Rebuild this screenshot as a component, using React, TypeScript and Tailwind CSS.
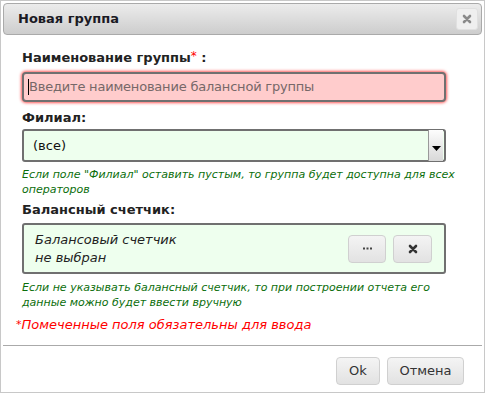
import React from "react";

const font = { fontFamily: '"DejaVu Sans", Verdana, sans-serif' };

export default function App() {
  return (
    <div
      className="w-[485px] h-[393px] border border-[#c8c8c8] bg-white flex flex-col text-[13px] text-[#222]"
      style={font}
    >
      {/* Title bar */}
      <div className="mx-[2px] mt-[2px] h-[32px] rounded-[4px] border border-[#aaa] bg-gradient-to-b from-[#ececec] to-[#cdcdcd] flex items-center justify-between pl-[14px] pr-[3px]">
        <span className="font-bold text-[13px] text-[#1a1a24] leading-[16px]">Новая группа</span>
        <div className="w-[22px] h-[22px] rounded-[3px] bg-[#efefef] border border-[#e0e0e0] flex items-center justify-center">
          <svg width="10" height="10" viewBox="0 0 10 10">
            <path d="M2 2 L8 8 M8 2 L2 8" stroke="#8a8a8a" strokeWidth="2.6" strokeLinecap="round" />
          </svg>
        </div>
      </div>

      <div className="pl-[21px] flex flex-col">
        {/* Label 1 */}
        <div className="mt-[15px] h-[16px] leading-[16px] font-bold">
          Наименование группы<sup className="text-[#ff0000] font-normal text-[12px] relative top-[-2px]">*</sup> :
        </div>
        {/* Input */}
        <div className="mt-[6px] w-[424px] h-[30px] rounded-[4px] border-2 border-[#707070] bg-[#ffcccc] shadow-[0_0_3px_1px_#ff5a5a] flex items-center pl-[4px]">
          <span className="w-[1px] h-[16px] bg-black" />
          <span className="text-[#766868] leading-[16px] tracking-[-0.2px]">Введите наименование балансной группы</span>
        </div>

        {/* Label 2 */}
        <div className="mt-[8px] h-[16px] leading-[16px] font-bold">Филиал:</div>
        {/* Select */}
        <div className="mt-[3px] w-[424px] h-[33px] rounded-[3px] border-2 border-[#707070] bg-[#eeffee] flex items-stretch">
          <div className="flex-1 flex items-center pl-[9px] text-[#111] leading-[16px]">(все)</div>
          <div className="w-[15px] my-[-1px] mr-[1px] border-l border-[#999] bg-gradient-to-b from-[#fdfdfd] to-[#d8d8d8] flex items-center justify-center pt-[6px]">
            <svg width="9" height="5" viewBox="0 0 9 5">
              <path d="M0 0 L9 0 L4.5 5 Z" fill="#000" />
            </svg>
          </div>
        </div>
        {/* Helper 1 */}
        <div className="mt-[5px] w-[450px] text-[11px] leading-[15px] italic text-[#0b6e0b]">
          Если поле "Филиал" оставить пустым, то группа будет доступна для всех операторов
        </div>

        {/* Label 3 */}
        <div className="mt-[5px] h-[16px] leading-[16px] font-bold">Балансный счетчик:</div>
        {/* Box */}
        <div className="mt-[5px] w-[424px] h-[51px] rounded-[3px] border-2 border-[#707070] bg-[#eeffee] flex items-center justify-between pl-[11px] pr-[12px]">
          <div className="italic text-[#222] leading-[18px]">
            Балансовый счетчик
            <br />
            не выбран
          </div>
          <div className="flex gap-[7px]">
            <div className="w-[38px] h-[28px] rounded-[4px] border border-[#d0d0d0] bg-gradient-to-b from-[#f4f4f4] to-[#e2e2e2] flex items-center justify-center">
              <svg width="9" height="3" viewBox="0 0 9 3">
                <rect x="0" y="0.5" width="2" height="2" fill="#444" />
                <rect x="3.5" y="0.5" width="2" height="2" fill="#444" />
                <rect x="7" y="0.5" width="2" height="2" fill="#444" />
              </svg>
            </div>
            <div className="w-[39px] h-[28px] rounded-[4px] border border-[#d0d0d0] bg-gradient-to-b from-[#f4f4f4] to-[#e2e2e2] flex items-center justify-center">
              <svg width="10" height="10" viewBox="0 0 10 10">
                <path d="M2 2 L8 8 M8 2 L2 8" stroke="#333" strokeWidth="2.6" strokeLinecap="round" />
              </svg>
            </div>
          </div>
        </div>
        {/* Helper 2 */}
        <div className="mt-[6px] w-[450px] text-[11px] leading-[15px] italic text-[#0b6e0b]">
          Если не указывать балансный счетчик, то при построении отчета его данные можно будет ввести вручную
        </div>
      </div>

      {/* Required note */}
      <div className="mt-[7px] pl-[15px] h-[16px] leading-[16px] italic text-[#ff0000]">
        <sup className="not-italic text-[11px] relative top-[-1px]">*</sup>Помеченные поля обязательны для ввода
      </div>

      {/* Separator */}
      <div className="mt-[12px] mx-[2px] h-[1px] bg-[#aaa]" />

      {/* Footer */}
      <div className="mt-[11px] flex justify-end gap-[7px] pr-[20px]">
        <div className="w-[44px] h-[28px] rounded-[4px] border border-[#d0d0d0] bg-gradient-to-b from-[#f4f4f4] to-[#e2e2e2] flex items-center justify-center text-[#333] leading-[16px]">
          Ok
        </div>
        <div className="w-[77px] h-[28px] rounded-[4px] border border-[#d0d0d0] bg-gradient-to-b from-[#f4f4f4] to-[#e2e2e2] flex items-center justify-center text-[#333] leading-[16px]">
          Отмена
        </div>
      </div>
    </div>
  );
}
